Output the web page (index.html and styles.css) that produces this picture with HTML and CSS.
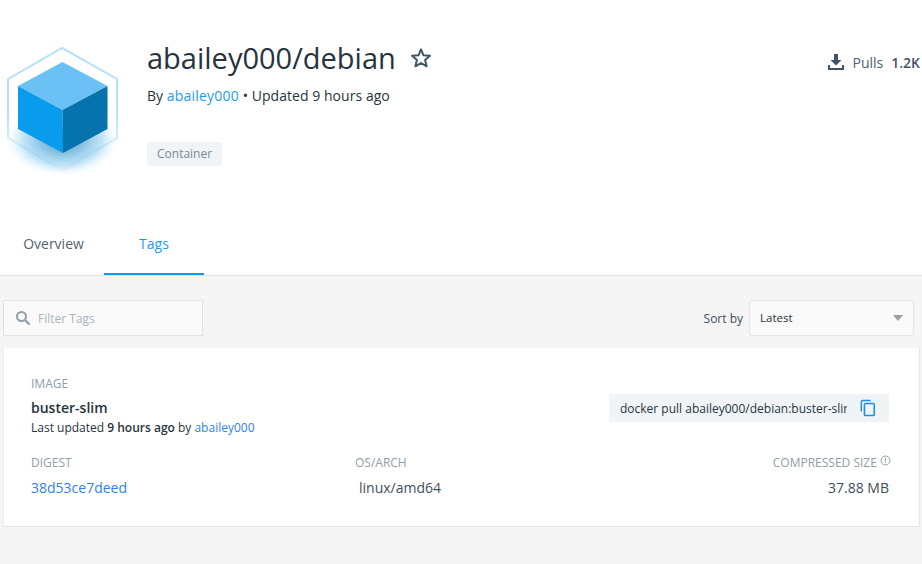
FILE: index.html
```html
<!DOCTYPE html>
<html lang="en">
<head>
<meta charset="utf-8">
<title>abailey000/debian</title>
<link rel="stylesheet" href="styles.css">
</head>
<body>
<header class="hero">
  <div class="hero-main">
    <svg class="logo" width="125" height="140" viewBox="0 0 125 140" aria-hidden="true">
      <defs>
        <linearGradient id="hexfade" x1="0" y1="0" x2="0" y2="1">
          <stop offset="0" stop-color="#addff8"/>
          <stop offset="0.55" stop-color="#b5e2f9"/>
          <stop offset="1" stop-color="#c5e9fa" stop-opacity="0.2"/>
        </linearGradient>
        <radialGradient id="shadow" cx="0.5" cy="0.5" r="0.5">
          <stop offset="0" stop-color="#0773ad" stop-opacity="0.8"/>
          <stop offset="0.7" stop-color="#4bb0e6" stop-opacity="0.35"/>
          <stop offset="1" stop-color="#bde4f8" stop-opacity="0"/>
        </radialGradient>
      </defs>
      <polygon points="62,8 8,39 8,98 62,130 117,98 117,39" fill="none" stroke="url(#hexfade)" stroke-width="2"/>
      <ellipse cx="62.500" cy="100" rx="56" ry="36" fill="url(#shadow)"/>
      <polygon points="62.500,22 107.500,46 62.500,70 18,46" fill="#6bc1f5"/>
      <polygon points="18,46 62.500,70 63,113 18,89" fill="#099cec"/>
      <polygon points="62.500,70 107.500,46 107.500,89 63,113" fill="#0773ad"/>
    </svg>
    <div class="hero-info">
      <div class="title-row">
        <h1 class="title">abailey000/debian</h1>
        <svg class="star" width="22" height="22" viewBox="0 0 22 22" aria-hidden="true">
          <polygon points="11,2.300 13.500,8.300 20,8.800 15.100,13 16.600,19.300 11,16 5.400,19.300 6.900,13 2,8.800 8.500,8.300" fill="none" stroke="#3f5467" stroke-width="2" stroke-linejoin="round"/>
        </svg>
      </div>
      <p class="byline">By <a class="owner" href="#">abailey000</a> • Updated 9 hours ago</p>
      <span class="tag">Container</span>
    </div>
  </div>
  <div class="pulls">
    <svg class="pull-icon" width="18" height="18" viewBox="0 0 18 18" aria-hidden="true">
      <path d="M7 1h4v6h3.500L9 12.500 3.500 7H7z M1 12h2v3h12v-3h2v5H1z" fill="#3f5467"/>
    </svg>
    <span class="pulls-label">Pulls</span>
    <strong class="pulls-count">1.2K</strong>
  </div>
</header>
<nav class="tabs">
  <a class="tab" href="#">Overview</a>
  <a class="tab tab-active" href="#">Tags</a>
</nav>
<main class="content">
  <div class="toolbar">
    <div class="filter">
      <svg width="16" height="16" viewBox="0 0 16 16" aria-hidden="true">
        <circle cx="6.500" cy="6.500" r="4.500" fill="none" stroke="#8f9ea8" stroke-width="2"/>
        <path d="M10 10l4.500 4.500" stroke="#8f9ea8" stroke-width="2.200"/>
      </svg>
      <span class="filter-text">Filter Tags</span>
    </div>
    <div class="sort">
      <span class="sort-label">Sort by</span>
      <div class="select"><span>Latest</span><span class="caret"></span></div>
    </div>
  </div>
  <section class="card">
    <div class="card-top">
      <div>
        <div class="label">IMAGE</div>
        <div class="tag-name">buster-slim</div>
        <div class="updated">Last updated <b class="strong">9 hours ago</b> by <a class="link" href="#">abailey000</a></div>
      </div>
      <div class="pull-cmd">
        <span class="cmd-text">docker pull abailey000/debian:buster-slim</span>
        <svg width="16" height="18" viewBox="0 0 18 20" aria-hidden="true">
          <path d="M12 1.500H3A1.500 1.500 0 0 0 1.500 3v11" fill="none" stroke="#1d8fee" stroke-width="1.600"/>
          <rect x="5" y="5" width="11" height="13.500" rx="1.200" fill="none" stroke="#1d8fee" stroke-width="1.800"/>
        </svg>
      </div>
    </div>
    <div class="card-bottom">
      <div class="col-digest">
        <div class="label">DIGEST</div>
        <a class="digest" href="#">38d53ce7deed</a>
      </div>
      <div class="col-os">
        <div class="label">OS/ARCH</div>
        <div class="value os-value">linux/amd64</div>
      </div>
      <div class="col-size">
        <div class="label">COMPRESSED SIZE
          <svg class="info" width="11" height="11" viewBox="0 0 11 11" aria-hidden="true">
            <circle cx="5.500" cy="5.500" r="4.500" fill="none" stroke="#8f9ea8" stroke-width="1"/>
            <path d="M5.500 2.800v3.400M5.500 7.200v1" stroke="#8f9ea8" stroke-width="1"/>
          </svg>
        </div>
        <div class="value">37.88 MB</div>
      </div>
    </div>
  </section>
</main>
</body>
</html>
```

FILE: styles.css
```css
* {
  box-sizing: border-box;
}

html,
body {
  height: 100%;
}

body {
  margin: 0;
  display: flex;
  flex-direction: column;
  overflow: hidden;
  background: #fff;
  color: #27343e;
  font-family: "Open Sans", sans-serif;
}

a {
  text-decoration: none;
}

.hero {
  display: flex;
  justify-content: space-between;
  height: 204px;
  padding-top: 39px;
}

.hero-main {
  display: flex;
}

.logo {
  flex: none;
  margin-top: 1px;
  margin-right: 22px;
}

.title-row {
  display: flex;
  align-items: center;
  height: 38px;
}

.title {
  margin: 0;
  font-size: 29px;
  font-weight: 400;
  line-height: 38px;
  color: #27343e;
}

.star {
  margin-left: 14px;
}

.byline {
  margin: 9px 0 0;
  font-size: 14px;
  line-height: 20px;
  letter-spacing: 0.05px;
  color: #27343e;
}

.owner {
  letter-spacing: 0.2px;
  color: #1d9bf0;
}

.tag {
  display: inline-block;
  margin-top: 36px;
  padding: 0 10px;
  height: 24px;
  border-radius: 2px;
  background: #f0f4f7;
  color: #7b8a95;
  font-size: 12px;
  line-height: 24px;
}

.pulls {
  display: flex;
  align-items: center;
  align-self: flex-start;
  height: 18px;
  margin-top: 14px;
  margin-right: 2px;
  font-size: 14px;
  color: #3f5467;
}

.pull-icon {
  margin-right: 7px;
}

.pulls-label {
  margin-right: 8px;
  color: #4d6070;
}

.pulls-count {
  font-weight: 600;
  font-size: 14px;
}

.tabs {
  display: flex;
  height: 72px;
  border-bottom: 1px solid #dfe3e6;
}

.tab {
  display: flex;
  align-items: center;
  justify-content: center;
  width: 100px;
  height: 71px;
  padding-top: 8px;
  font-size: 14px;
  color: #52636f;
}

.tab:first-child {
  width: 104px;
  padding-left: 3px;
}

.tab-active {
  color: #1d9bf0;
  border-bottom: 2px solid #099cec;
  padding-top: 10px;
}

.content {
  flex: 1;
  padding: 24px 2px 0 3px;
  background: #f5f5f5;
}

.toolbar {
  display: flex;
  justify-content: space-between;
  padding-right: 6px;
}

.filter {
  display: flex;
  align-items: center;
  gap: 7px;
  width: 200px;
  height: 36px;
  padding-left: 11px;
  border: 1px solid #dfe3e6;
  background: #fafafa;
  font-size: 12px;
  color: #a9b4bb;
}

.sort {
  display: flex;
  align-items: center;
  gap: 6px;
}

.sort-label {
  font-size: 12px;
  color: #3f4f5c;
}

.select {
  display: flex;
  align-items: center;
  justify-content: space-between;
  width: 165px;
  height: 36px;
  padding: 0 10px 1px 10px;
  border: 1px solid #e3e3e3;
  border-radius: 3px;
  background: #fafafa;
  font-size: 11.500px;
  color: #27343e;
}

.caret {
  width: 0;
  height: 0;
  border-left: 5px solid transparent;
  border-right: 5px solid transparent;
  border-top: 6px solid #a0a0a0;
}

.card {
  height: 179px;
  margin-top: 12px;
  padding: 28px 30px 0 27px;
  border: 1px solid #e6e6e6;
  border-top: 0;
  border-left-color: #eeeeee;
  background: #fff;
}

.card-top {
  display: flex;
  justify-content: space-between;
}

.label {
  font-size: 12px;
  line-height: 16px;
  color: #8f9ea8;
}

.tag-name {
  margin-top: 7px;
  font-size: 14px;
  font-weight: 600;
  line-height: 18px;
  color: #27343e;
}

.updated {
  margin-top: 3px;
  font-size: 12px;
  line-height: 16px;
  color: #27343e;
}

.strong {
  font-weight: 600;
}

.link {
  color: #2f7ff0;
}

.pull-cmd {
  display: flex;
  align-items: center;
  justify-content: space-between;
  width: 280px;
  height: 28px;
  margin-top: 18px;
  padding: 0 13px 0 11px;
  border-radius: 2px;
  background: #f0f4f7;
  font-size: 12px;
  color: #27343e;
}

.cmd-text {
  width: 227px;
  overflow: hidden;
  white-space: nowrap;
}

.card-bottom {
  display: flex;
  margin-top: 19px;
}

.col-digest {
  width: 324px;
}

.col-os {
  flex: 1;
}

.col-size {
  text-align: right;
}

.digest {
  display: block;
  margin-top: 7px;
  font-size: 14px;
  line-height: 20px;
  color: #2f7ff0;
}

.value {
  margin-top: 7px;
  font-size: 14px;
  line-height: 20px;
  color: #3f4f5c;
}

.os-value {
  padding-left: 4px;
}

.info {
  margin-right: -2px;
  vertical-align: 1px;
}
```
